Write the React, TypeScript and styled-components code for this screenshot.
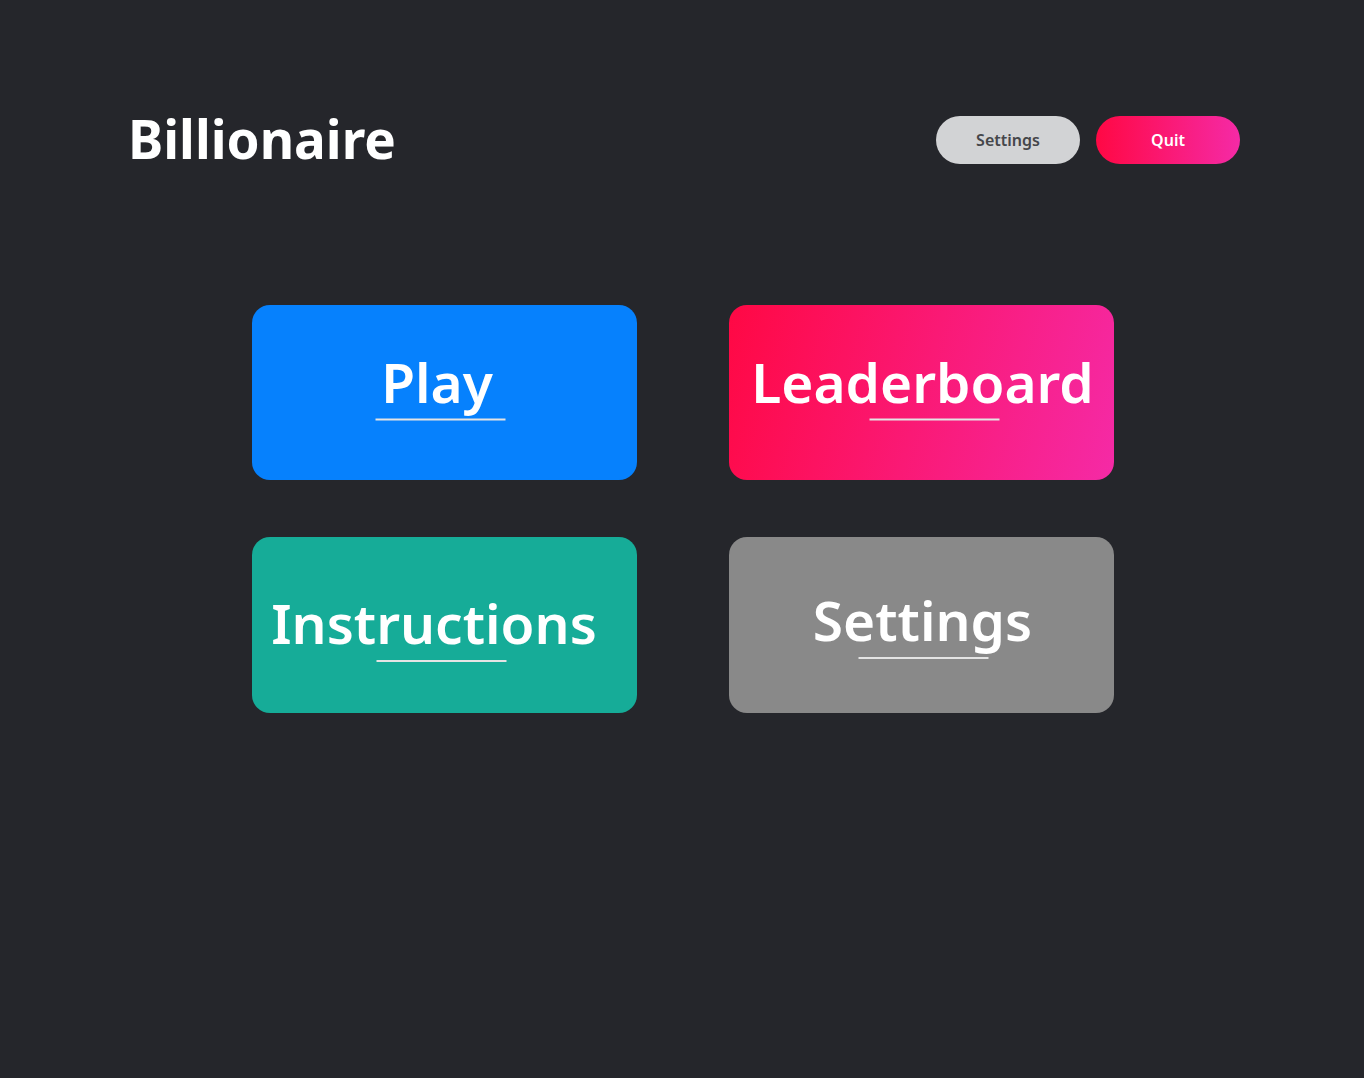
import React from "react";
import styled, { createGlobalStyle } from "styled-components";

const GlobalStyle = createGlobalStyle`
  html, body {
    margin: 0;
    padding: 0;
    background: #25262b;
    min-height: 100%;
  }
  body {
    font-family: "Noto Sans", "Open Sans", sans-serif;
    color: #ffffff;
  }
`;

const Page = styled.div`
  min-height: 100vh;
  box-sizing: border-box;
  padding: 116px 124px 0;
`;

const Header = styled.header`
  display: flex;
  align-items: center;
  justify-content: space-between;
  height: 48px;
`;

const Title = styled.h1`
  margin: -3px 0 0 4px;
  font-size: 53px;
  font-weight: 700;
  line-height: 1;
`;

const Actions = styled.div`
  display: flex;
  gap: 16px;
`;

const PillButton = styled.button<{ $variant: "light" | "danger" }>`
  width: 144px;
  height: 48px;
  border: none;
  border-radius: 24px;
  font-family: inherit;
  font-size: 16px;
  font-weight: 600;
  cursor: pointer;
  color: ${(p) => (p.$variant === "light" ? "#45464a" : "#ffffff")};
  background: ${(p) =>
    p.$variant === "light"
      ? "#d2d3d5"
      : "linear-gradient(90deg, #ff0844 0%, #f52aa6 100%)"};
`;

const Grid = styled.main`
  display: grid;
  grid-template-columns: repeat(2, 385px);
  grid-template-rows: 175px 176px;
  column-gap: 92px;
  row-gap: 57px;
  margin: 141px 0 0 128px;
`;

const Card = styled.button<{ $bg: string }>`
  display: flex;
  flex-direction: column;
  align-items: center;
  justify-content: center;
  border: none;
  border-radius: 18px;
  background: ${(p) => p.$bg};
  color: #ffffff;
  font-family: inherit;
  cursor: pointer;
  padding: 0;
  overflow: visible;
`;

const Label = styled.span<{ $shift: number; $lift: number }>`
  font-size: 55px;
  font-weight: 600;
  line-height: 1;
  white-space: nowrap;
  transform: translate(${(p) => p.$shift}px, ${(p) => p.$lift}px);
`;

const Underline = styled.span<{ $shift: number; $lift: number }>`
  display: block;
  width: 130px;
  height: 2px;
  background: #e4e4e4;
  margin-top: 10px;
  transform: translate(${(p) => p.$shift}px, ${(p) => p.$lift}px);
`;

type Item = {
  label: string;
  bg: string;
  textShift: number;
  lineShift: number;
  lift: number;
};

const items: Item[] = [
  { label: "Play", bg: "#0681fd", textShift: -7.5, lineShift: -4.5, lift: -5.5 },
  {
    label: "Leaderboard",
    bg: "linear-gradient(105deg, #ff0844 0%, #f52aa6 100%)",
    textShift: 1,
    lineShift: 12.5,
    lift: -5.5,
  },
  { label: "Instructions", bg: "#16ac98", textShift: -10.5, lineShift: -3.5, lift: 3 },
  { label: "Settings", bg: "#898989", textShift: 1, lineShift: 1.5, lift: 0 },
];

const App: React.FC = () => {
  return (
    <>
      <GlobalStyle />
      <Page>
        <Header>
          <Title>Billionaire</Title>
          <Actions>
            <PillButton $variant="light">Settings</PillButton>
            <PillButton $variant="danger">Quit</PillButton>
          </Actions>
        </Header>
        <Grid>
          {items.map((item) => (
            <Card key={item.label} $bg={item.bg}>
              <Label $shift={item.textShift} $lift={item.lift}>
                {item.label}
              </Label>
              <Underline $shift={item.lineShift} $lift={item.lift} />
            </Card>
          ))}
        </Grid>
      </Page>
    </>
  );
};

export default App;
